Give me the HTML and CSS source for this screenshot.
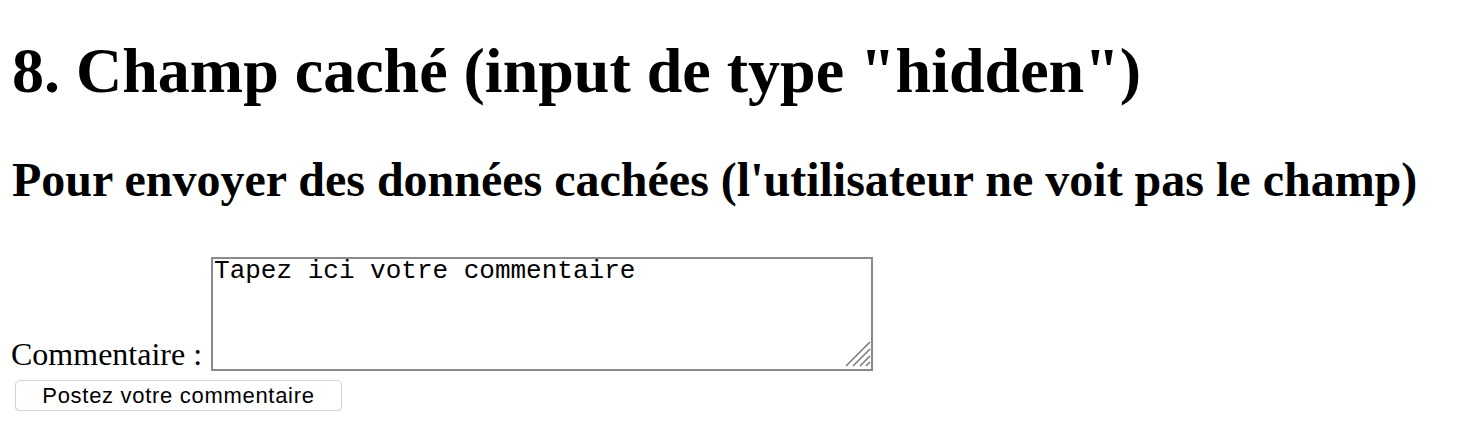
FILE: index.html
```html
<!DOCTYPE html>
<html lang="fr">
<head>
<meta charset="utf-8">
<title>Champ caché</title>
<link rel="stylesheet" href="styles.css">
</head>
<body>
<h1 class="title">8. Champ caché (input de type "hidden")</h1>
<h2 class="subtitle">Pour envoyer des données cachées (l'utilisateur ne voit pas le champ)</h2>
<form class="form" action="#" method="post">
  <div class="row"><label class="label" for="commentaire">Commentaire :</label> <span class="field"><textarea class="textarea" id="commentaire" name="commentaire">Tapez ici votre commentaire</textarea><svg class="grip" width="26" height="26" viewBox="0 0 26 26" aria-hidden="true"><path d="M1 25 L25 1 M8 25 L25 8 M15 25 L25 15 M21 25 L25 21" stroke="#7c7c7c" stroke-width="1.6" fill="none"/></svg></span></div>
  <input type="hidden" name="pseudo" value="">
  <button class="button" type="submit">Postez votre commentaire</button>
</form>
</body>
</html>
```
FILE: styles.css
```css
html, body {
  margin: 0;
  padding: 0;
  background: #ffffff;
}

body {
  padding: 0 12px;
  font-family: "Liberation Serif", "Times New Roman", serif;
  font-size: 32px;
  color: #000000;
}

.title {
  margin: 34px 0 44px 0;
  font-size: 64px;
  font-weight: bold;
  line-height: normal;
}

.subtitle {
  margin: 0 0 50px 0;
  font-size: 48px;
  font-weight: bold;
  line-height: normal;
}

.form {
  margin: 0;
}

.row {
  margin-left: -1px;
}

.label {
  font-size: 32px;
}

.field {
  position: relative;
  display: inline-block;
  vertical-align: text-bottom;
  margin: 0 0 1px 1px;
}

.textarea {
  display: block;
  box-sizing: border-box;
  width: 662px;
  height: 114px;
  margin: 0;
  padding: 0 1px;
  border: 2px solid #8a8a8a;
  border-radius: 0;
  background: #ffffff;
  font-family: "Liberation Mono", "Courier New", monospace;
  font-size: 26px;
  line-height: 24px;
  color: #000000;
  resize: none;
  outline: none;
}

.grip {
  position: absolute;
  right: 2px;
  bottom: 4px;
}

.button {
  display: flex;
  align-items: center;
  justify-content: center;
  box-sizing: border-box;
  width: 327px;
  height: 31px;
  margin: 7px 0 0 3px;
  padding: 0;
  border: 1px solid #d4d4d4;
  border-radius: 5px;
  background: #ffffff;
  box-shadow: 0 1px 1px rgba(0, 0, 0, 0.12);
  font-family: "Liberation Sans", Arial, sans-serif;
  font-size: 22px;
  letter-spacing: 0.7px;
  color: #000000;
}
```
